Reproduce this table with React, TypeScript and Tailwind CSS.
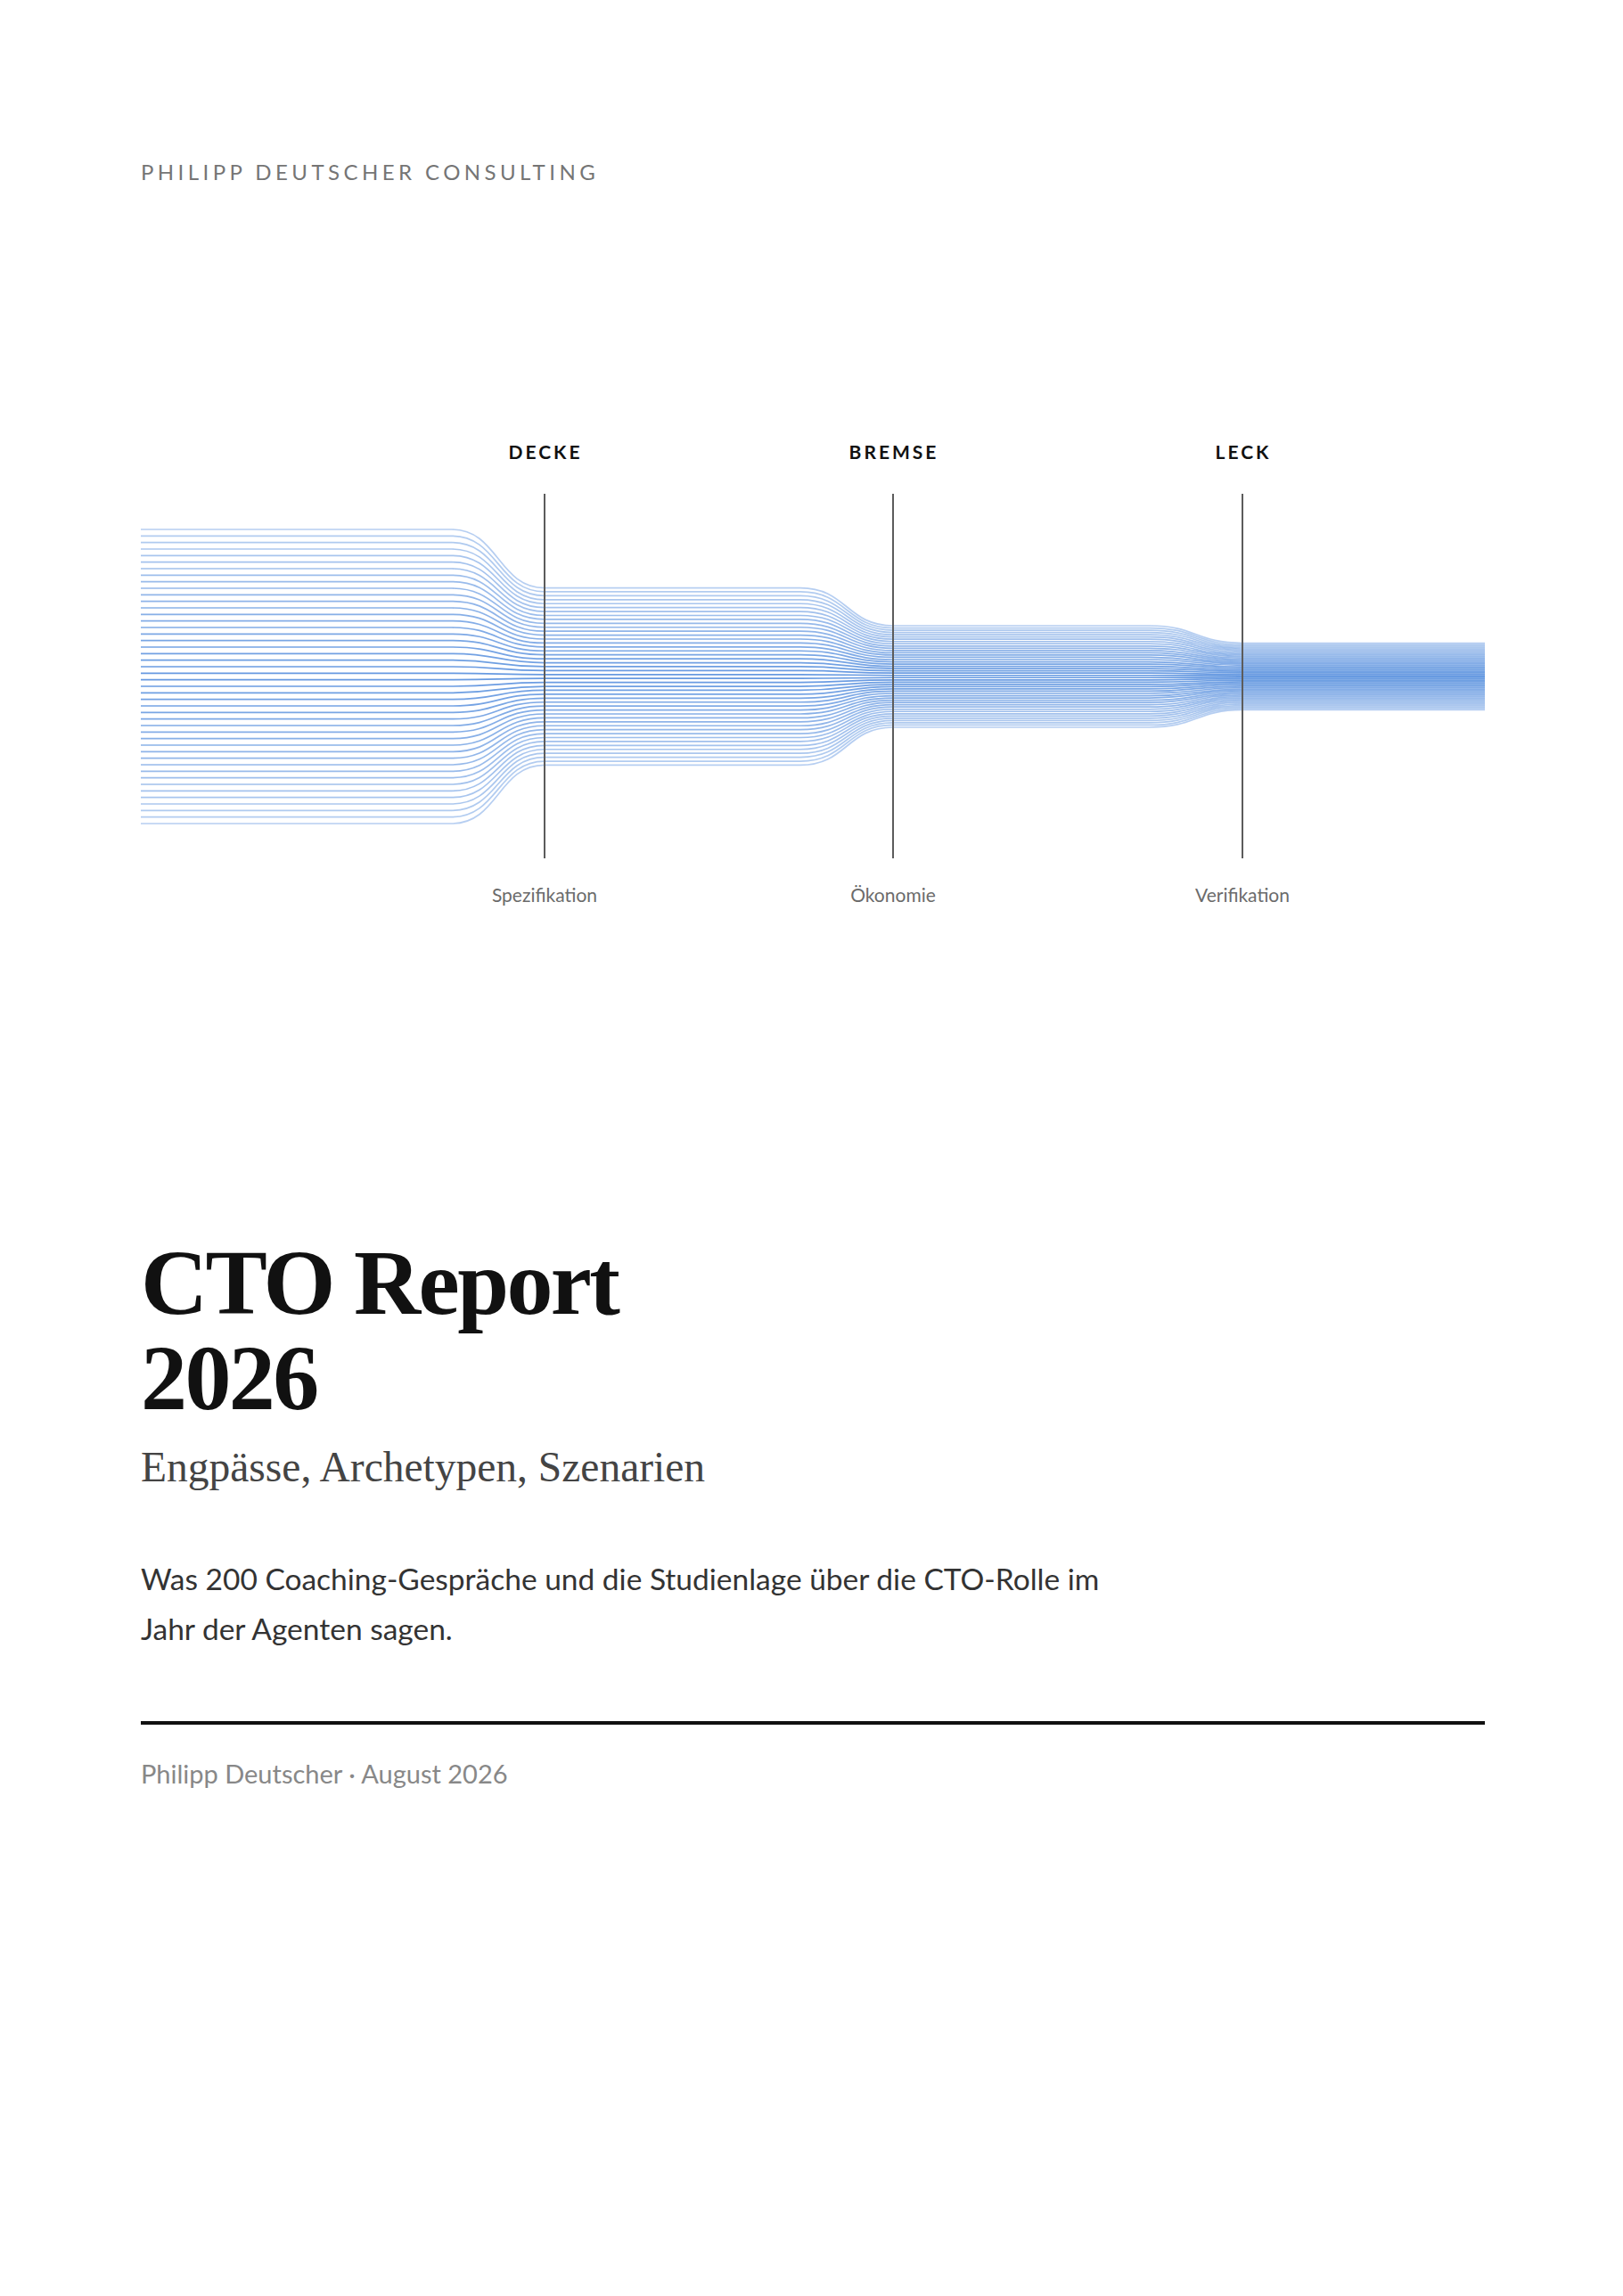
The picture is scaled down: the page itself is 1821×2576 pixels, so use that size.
import React from "react";

// strand bundle: 46 lines narrowing at each gate
const N = 46;
const CENTER = 279;
const SPACING = [7.333, 4.42, 2.533, 1.667];
const GATES = [453, 844, 1236];
const CURVE = 104;
const END = 1508;

const strandPath = (i: number): string => {
  const off = i - (N - 1) / 2;
  const y = SPACING.map((s) => CENTER + off * s);
  let d = `M0 ${y[0]}`;
  GATES.forEach((gx, k) => {
    const mid = gx - CURVE / 2;
    d += ` H${gx - CURVE} C${mid} ${y[k]} ${mid} ${y[k + 1]} ${gx} ${y[k + 1]}`;
  });
  d += ` H${END}`;
  return d;
};

const gates = [
  { x: 453, title: "DECKE", label: "Spezifikation" },
  { x: 844, title: "BREMSE", label: "Ökonomie" },
  { x: 1236, title: "LECK", label: "Verifikation" },
];

function FlowChart() {
  return (
    <svg width="1515" height="560" viewBox="0 0 1515 560" className="block">
      {Array.from({ length: N }).map((_, i) => {
        const dist = Math.abs(i - (N - 1) / 2) / ((N - 1) / 2);
        return (
          <path
            key={i}
            d={strandPath(i)}
            fill="none"
            stroke="#3f7fd9"
            strokeWidth={1.7}
            strokeOpacity={0.8 - 0.42 * dist}
          />
        );
      })}
      {gates.map((g) => (
        <g key={g.title}>
          <line x1={g.x} y1={74} x2={g.x} y2={483} stroke="#5c5c5c" strokeWidth={2} />
          <text
            x={g.x + 1}
            y={35}
            textAnchor="middle"
            fill="#111111"
            fontFamily="Lato, 'Open Sans', sans-serif"
            fontWeight={700}
            fontSize={21}
            letterSpacing={3}
          >
            {g.title}
          </text>
          <text
            x={g.x}
            y={532}
            textAnchor="middle"
            fill="#6b6b6b"
            fontFamily="Lato, 'Open Sans', sans-serif"
            fontSize={21}
          >
            {g.label}
          </text>
        </g>
      ))}
    </svg>
  );
}

export default function App() {
  return (
    <div className="min-h-[2576px] bg-white px-[158px] pt-[177px] font-['Lato','Open_Sans',sans-serif]">
      <p className="text-[24px] leading-[32px] tracking-[0.185em] text-[#757575]">
        PHILIPP DEUTSCHER CONSULTING
      </p>

      <div className="mt-[271px]">
        <FlowChart />
      </div>

      <h1 className="mt-[345px] font-['Liberation_Serif','Times_New_Roman',serif] text-[104px] font-bold leading-[107px] tracking-[-0.025em] text-[#111]">
        CTO Report
        <br />
        2026
      </h1>
      <p className="mt-[19px] font-['Liberation_Serif','Times_New_Roman',serif] text-[47.5px] leading-[56px] text-[#444]">
        Engpässe, Archetypen, Szenarien
      </p>

      <p className="mt-[69px] max-w-[1130px] text-[33.5px] leading-[56px] text-[#333]">
        Was 200 Coaching-Gespräche und die Studienlage über die CTO-Rolle im Jahr der Agenten sagen.
      </p>

      <div className="mt-[76px] h-[4px] w-[1508px] bg-[#111]" />

      <p className="mt-[37px] text-[29px] leading-[36px] text-[#888]">
        Philipp Deutscher · August 2026
      </p>
    </div>
  );
}
